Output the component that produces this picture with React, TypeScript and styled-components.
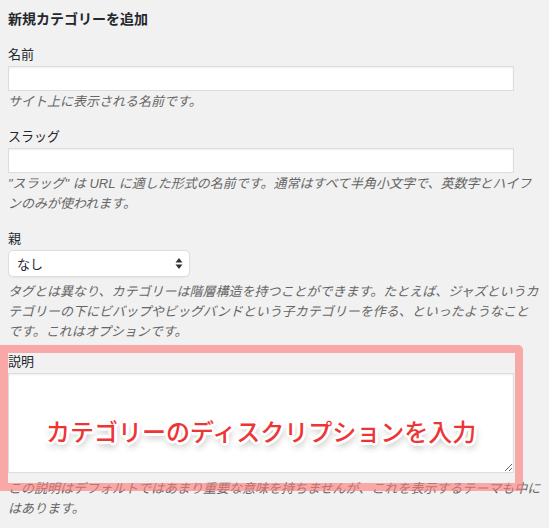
import React from "react";
import styled, { createGlobalStyle } from "styled-components";

const GlobalStyle = createGlobalStyle`
  html, body {
    margin: 0;
    padding: 0;
    background: #f1f1f1;
  }
  body {
    font-family: "Liberation Sans", "Noto Sans CJK JP", sans-serif;
    color: #23282d;
    font-size: 13px;
  }
`;

const Page = styled.div`
  width: 533px;
  padding: 0 8px;
`;

const Heading = styled.h2`
  margin: 9px 0 16px;
  font-size: 14px;
  line-height: 20px;
  font-weight: 700;
  color: #23282d;
`;

const Field = styled.div<{ $gap: number }>`
  position: relative;
  display: flex;
  flex-direction: column;
  align-items: flex-start;
  margin-bottom: ${(p) => p.$gap}px;
`;

const Label = styled.label`
  display: block;
  font-size: 13px;
  line-height: 20px;
  color: #23282d;
  margin-bottom: 1px;
`;

const TextInput = styled.input`
  box-sizing: border-box;
  width: 95%;
  height: 25px;
  margin: 0;
  padding: 3px 5px;
  border: 1px solid #ddd;
  background: #fff;
  box-shadow: inset 0 1px 2px rgba(0, 0, 0, 0.07);
  font: inherit;
  outline: none;
`;

const Desc = styled.p<{ $top: number }>`
  margin: ${(p) => p.$top}px 0 0;
  font-size: 13px;
  line-height: 20px;
  font-style: italic;
  color: #666;
`;

const SelectBox = styled.div`
  box-sizing: border-box;
  width: 182px;
  height: 27px;
  display: flex;
  align-items: center;
  justify-content: space-between;
  padding: 0 6px 0 8px;
  background: #fff;
  border: 1px solid #ddd;
  border-radius: 5px;
  box-shadow: 0 1px 1px rgba(0, 0, 0, 0.04);
  font-size: 13px;
  color: #23282d;
`;

const TextareaWrap = styled.div`
  position: relative;
  width: 95%;
  height: 100px;
`;

const TextArea = styled.textarea`
  box-sizing: border-box;
  display: block;
  width: 100%;
  height: 100px;
  margin: 0;
  padding: 2px 6px;
  border: 1px solid #ddd;
  background: #fff;
  box-shadow: inset 0 1px 2px rgba(0, 0, 0, 0.07);
  font: inherit;
  outline: none;
`;

const Caption = styled.div`
  position: absolute;
  top: 42px;
  left: 0;
  right: 0;
  text-align: center;
  font-family: "Noto Sans CJK JP", sans-serif;
  font-size: 24px;
  line-height: 32px;
  font-weight: 500;
  color: #ee3535;
  pointer-events: none;
  text-shadow:
    -2px -2px 0 #fff, 2px -2px 0 #fff, -2px 2px 0 #fff, 2px 2px 0 #fff,
    0 -3px 0 #fff, 0 3px 0 #fff, -3px 0 0 #fff, 3px 0 0 #fff,
    1px 4px 7px rgba(0, 0, 0, 0.45);
`;

const Frame = styled.div`
  position: absolute;
  top: -7px;
  left: -8px;
  width: 523px;
  height: 146px;
  box-sizing: border-box;
  border: 8px solid rgba(255, 120, 120, 0.6);
  border-radius: 0 5px 0 0;
  pointer-events: none;
`;

const Arrows = () => (
  <svg width="8" height="13" viewBox="0 0 8 13" aria-hidden="true">
    <path d="M4 1 L7.5 5.5 L0.5 5.5 Z" fill="#333" />
    <path d="M4 12 L7.5 7.5 L0.5 7.5 Z" fill="#333" />
  </svg>
);

export default function App() {
  return (
    <>
      <GlobalStyle />
      <Page>
        <Heading>新規カテゴリーを追加</Heading>

        <Field $gap={15}>
          <Label>名前</Label>
          <TextInput type="text" />
          <Desc $top={1}>サイト上に表示される名前です。</Desc>
        </Field>

        <Field $gap={15}>
          <Label>スラッグ</Label>
          <TextInput type="text" />
          <Desc $top={1}>
            "スラッグ" は URL に適した形式の名前です。通常はすべて半角小文字で、英数字とハイフンのみが使われます。
          </Desc>
        </Field>

        <Field $gap={10}>
          <Label>親</Label>
          <SelectBox>
            <span>なし</span>
            <Arrows />
          </SelectBox>
          <Desc $top={5}>
            タグとは異なり、カテゴリーは階層構造を持つことができます。たとえば、ジャズというカテゴリーの下にビバップやビッグバンドという子カテゴリーを作る、といったようなことです。これはオプションです。
          </Desc>
        </Field>

        <Field $gap={0}>
          <Label>説明</Label>
          <TextareaWrap>
            <TextArea />
            <Caption>カテゴリーのディスクリプションを入力</Caption>
          </TextareaWrap>
          <Desc $top={6}>
            この説明はデフォルトではあまり重要な意味を持ちませんが、これを表示するテーマも中にはあります。
          </Desc>
          <Frame />
        </Field>
      </Page>
    </>
  );
}
